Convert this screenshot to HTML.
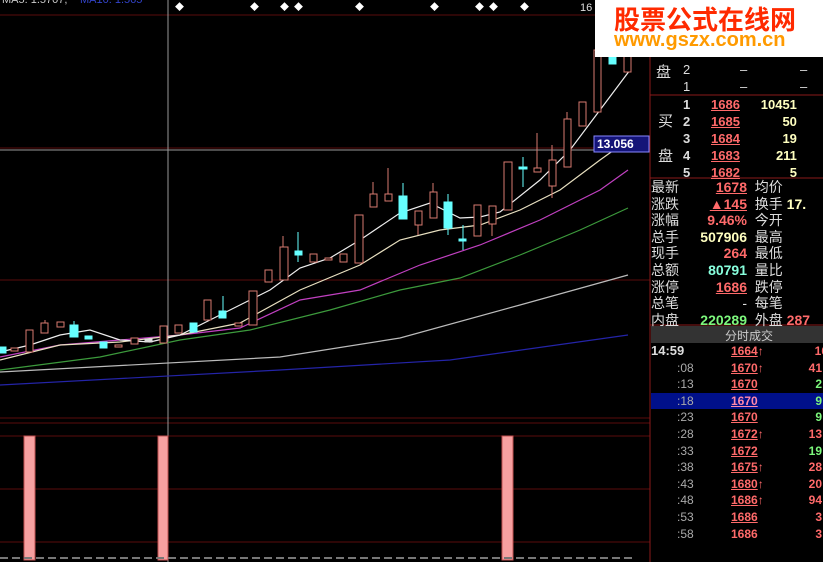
<!DOCTYPE html>
<html><head><meta charset="utf-8"><style>
body{margin:0;background:#000;width:823px;height:562px;overflow:hidden;position:relative;font-family:"Liberation Sans","Noto Sans CJK SC",sans-serif}
.p{position:absolute;white-space:nowrap;font-size:13px}
.r{color:#ff6a6a;font-weight:bold}
.u{text-decoration:underline}
.w{color:#ddd}
.y{color:#ffffc0;font-weight:bold}
.g{color:#7cf77c;font-weight:bold}
.t{display:inline-block;width:80px;color:#aaa;padding-left:26px;box-sizing:border-box}
.v{position:absolute;right:1px;text-align:right}
.row{position:relative;height:16.6px}
</style></head><body>
<svg width="823" height="562" style="position:absolute;left:0;top:0">
<g stroke="#5a0c0c" stroke-width="1">
<line x1="0" y1="15" x2="650" y2="15"/><line x1="0" y1="148" x2="650" y2="148"/>
<line x1="0" y1="280" x2="650" y2="280"/><line x1="0" y1="418" x2="650" y2="418"/>
<line x1="0" y1="423" x2="650" y2="423"/><line x1="0" y1="436" x2="650" y2="436"/>
<line x1="0" y1="489" x2="650" y2="489"/><line x1="0" y1="542" x2="650" y2="542"/>
</g>
<line x1="650" y1="0" x2="650" y2="562" stroke="#8a1a1a"/>
<line x1="0" y1="150" x2="595" y2="150" stroke="#999"/>
<line x1="168" y1="0" x2="168" y2="562" stroke="#999"/>
<text x="2" y="3" fill="#ccc" font-size="11" font-family="Liberation Sans">MA5: 1.5707,</text><text x="80" y="3" fill="#3344cc" font-size="11">MA10: 1.565</text>
<g fill="#fff"><text x="175" y="10" font-size="9">◆</text><text x="250" y="10" font-size="9">◆</text><text x="280" y="10" font-size="9">◆</text><text x="294" y="10" font-size="9">◆</text><text x="355" y="10" font-size="9">◆</text><text x="430" y="10" font-size="9">◆</text><text x="475" y="10" font-size="9">◆</text><text x="489" y="10" font-size="9">◆</text><text x="520" y="10" font-size="9">◆</text></g>
<g fill="none" stroke-width="1.2">
<polyline stroke="#2424a8" points="0,385 280,370 450,360 628,335"/>
<polyline stroke="#bbb" points="0,372 280,357 400,338 520,305 628,275"/>
<polyline stroke="#3c9a3c" points="0,370 100,357 180,340 250,330 330,310 400,290 460,278 520,255 580,230 628,208"/>
<polyline stroke="#c040c0" points="0,357 60,345 120,340 180,335 240,328 300,300 360,290 420,265 480,245 540,220 600,190 628,170"/>
<polyline stroke="#e8e0c0" points="0,360 60,345 120,342 180,335 240,323 300,290 360,265 400,240 440,230 480,225 520,210 560,190 600,160 628,140"/>
<polyline stroke="#eee" points="0,352 30,345 60,335 90,330 120,340 150,342 180,335 210,320 240,305 270,290 300,268 330,258 360,240 400,213 430,203 460,218 480,217 500,212 540,180 570,150 600,110 630,70"/>
</g>
<g stroke="#d87a70" fill="#000" stroke-width="1">
<rect x="11" y="348" width="7" height="3"/><rect x="26" y="330" width="7" height="22"/><rect x="41" y="323" width="7" height="10"/><rect x="57" y="322" width="7" height="5"/><rect x="115" y="345" width="7" height="2"/><rect x="131" y="338" width="7" height="6"/><rect x="160" y="326" width="7" height="17"/><rect x="175" y="325" width="7" height="8"/><rect x="204" y="300" width="7" height="20"/><rect x="235" y="323" width="7" height="3"/><rect x="249" y="291" width="8" height="34"/><rect x="265" y="270" width="7" height="12"/><rect x="280" y="247" width="8" height="33"/><rect x="310" y="254" width="7" height="8"/><rect x="325" y="258" width="7" height="2"/><rect x="340" y="254" width="7" height="8"/><rect x="355" y="215" width="8" height="48"/><rect x="370" y="194" width="7" height="13"/><rect x="385" y="194" width="7" height="7"/><rect x="415" y="211" width="7" height="14"/><rect x="430" y="192" width="7" height="26"/><rect x="474" y="205" width="7" height="31"/><rect x="489" y="206" width="7" height="18"/><rect x="504" y="162" width="8" height="48"/><rect x="534" y="168" width="7" height="4"/><rect x="549" y="160" width="7" height="26"/><rect x="564" y="119" width="7" height="48"/><rect x="579" y="102" width="7" height="24"/><rect x="594" y="50" width="7" height="62"/><rect x="624" y="50" width="7" height="22"/>
</g>
<g stroke="#d87a70"><line x1="45" y1="320" x2="45" y2="323"/><line x1="283" y1="236" x2="283" y2="247"/><line x1="373" y1="182" x2="373" y2="194"/><line x1="388" y1="168" x2="388" y2="194"/><line x1="433" y1="183" x2="433" y2="192"/><line x1="537" y1="133" x2="537" y2="168"/><line x1="552" y1="145" x2="552" y2="160"/><line x1="567" y1="112" x2="567" y2="119"/><line x1="418" y1="225" x2="418" y2="235"/><line x1="492" y1="224" x2="492" y2="236"/><line x1="552" y1="186" x2="552" y2="198"/></g>
<g fill="#6ff" stroke="#6ff">
<rect x="0" y="347" width="6" height="6"/><rect x="70" y="325" width="8" height="12"/><rect x="85" y="336" width="7" height="3"/><rect x="100" y="342" width="7" height="6"/><rect x="145" y="339" width="7" height="3" fill="#ddd" stroke="#ddd"/><rect x="190" y="323" width="7" height="9"/><rect x="219" y="311" width="7" height="7"/><rect x="295" y="251" width="7" height="4"/><rect x="399" y="196" width="8" height="23"/><rect x="444" y="202" width="8" height="26"/><rect x="459" y="239" width="7" height="2"/><rect x="519" y="167" width="8" height="2"/><rect x="609" y="56" width="7" height="8"/>
<line x1="74" y1="321" x2="74" y2="325"/><line x1="223" y1="296" x2="223" y2="311"/><line x1="298" y1="232" x2="298" y2="262"/><line x1="403" y1="183" x2="403" y2="196"/><line x1="448" y1="194" x2="448" y2="235"/><line x1="463" y1="225" x2="463" y2="250"/><line x1="523" y1="157" x2="523" y2="187"/><line x1="612" y1="45" x2="612" y2="56"/></g>
<g fill="#f6a0a0" stroke="#c05050"><rect x="24" y="436" width="11" height="124"/><rect x="158" y="436" width="10" height="124"/><rect x="502" y="436" width="11" height="124"/></g>
<line x1="0" y1="558" x2="635" y2="558" stroke="#777" stroke-width="2" stroke-dasharray="8,4"/>
<rect x="594" y="136" width="55" height="16" fill="#141478" stroke="#8888ff"/>
<text x="597" y="148" fill="#fff" font-size="12" font-weight="bold" font-family="Liberation Sans">13.056</text>
<line x1="650" y1="95" x2="823" y2="95" stroke="#8a1a1a"/><line x1="650" y1="178" x2="823" y2="178" stroke="#8a1a1a"/><line x1="650" y1="325" x2="823" y2="325" stroke="#8a1a1a"/>
<rect x="651" y="326" width="172" height="17" fill="#333"/>
<rect x="651" y="393" width="172" height="16" fill="#00108a"/>
</svg>
<div style="position:absolute;left:595px;top:0;width:228px;height:57px;background:#fff"></div>
<div class="p" style="left:614px;top:0;font-size:26px;font-weight:bold;color:#ff2a00">股票公式在线网</div>
<div class="p" style="left:614px;top:29px;font-size:20px;font-weight:bold;color:#ff9a00">www.gszx.com.cn</div>
<div class="p w" style="left:580px;top:2px;font-size:11px">16</div>
<div class="p w" style="left:656px;top:61px;font-size:15px">盘</div>
<div class="p w" style="left:683px;top:62px">2</div><div class="p w" style="left:740px;top:62px">–</div><div class="p w" style="left:800px;top:62px">–</div>
<div class="p w" style="left:683px;top:79px">1</div><div class="p w" style="left:740px;top:79px">–</div><div class="p w" style="left:800px;top:79px">–</div>
<div class="p w" style="left:658px;top:110px;font-size:15px">买</div><div class="p w" style="left:658px;top:145px;font-size:15px">盘</div>
<div style="position:absolute;left:683px;top:96px;font-size:13px;line-height:17px;font-weight:bold">
<div><span class="w" style="display:inline-block;width:28px">1</span><span class="r u">1686</span><span class="y" style="display:inline-block;width:57px;text-align:right">10451</span></div>
<div><span class="w" style="display:inline-block;width:28px">2</span><span class="r u">1685</span><span class="y" style="display:inline-block;width:57px;text-align:right">50</span></div>
<div><span class="w" style="display:inline-block;width:28px">3</span><span class="r u">1684</span><span class="y" style="display:inline-block;width:57px;text-align:right">19</span></div>
<div><span class="w" style="display:inline-block;width:28px">4</span><span class="r u">1683</span><span class="y" style="display:inline-block;width:57px;text-align:right">211</span></div>
<div><span class="w" style="display:inline-block;width:28px">5</span><span class="r u">1682</span><span class="y" style="display:inline-block;width:57px;text-align:right">5</span></div>
</div>
<div style="position:absolute;left:651px;top:179px;font-size:14px;line-height:16.6px;color:#ddd;width:172px;overflow:hidden;white-space:nowrap">
<div><span style="display:inline-block;width:96px">最新<span class="r u" style="float:right">1678</span></span>&nbsp;&nbsp;均价</div>
<div><span style="display:inline-block;width:96px">涨跌<span class="r u" style="float:right">▲145</span></span>&nbsp;&nbsp;换手 <span class="y">17.</span></div>
<div><span style="display:inline-block;width:96px">涨幅<span class="r" style="float:right">9.46%</span></span>&nbsp;&nbsp;今开</div>
<div><span style="display:inline-block;width:96px">总手<span class="y" style="float:right">507906</span></span>&nbsp;&nbsp;最高</div>
<div><span style="display:inline-block;width:96px">现手<span class="r" style="float:right">264</span></span>&nbsp;&nbsp;最低</div>
<div><span style="display:inline-block;width:96px">总额<span style="float:right;color:#8fd;font-weight:bold">80791</span></span>&nbsp;&nbsp;量比</div>
<div><span style="display:inline-block;width:96px">涨停<span class="r u" style="float:right">1686</span></span>&nbsp;&nbsp;跌停</div>
<div><span style="display:inline-block;width:96px">总笔<span style="float:right">-</span></span>&nbsp;&nbsp;每笔</div>
<div><span style="display:inline-block;width:96px">内盘<span class="g" style="float:right">220289</span></span>&nbsp;&nbsp;外盘 <span class="r">287</span></div>
</div>
<div class="p" style="left:725px;top:327px;font-size:12px;color:#ccc">分时成交</div>
<div style="position:absolute;left:651px;top:343px;font-size:12px;line-height:16.6px;width:172px;overflow:hidden;white-space:nowrap">
<div class="row"><span style="display:inline-block;width:80px;color:#ddd;font-weight:bold;font-size:13px">14:59</span><span class="r u">1664</span><span class="r">↑</span><span class="r v" style="right:-5px">16</span></div>
<div class="row"><span class="t">:08</span><span class="r u">1670</span><span class="r">↑</span><span class="r v">41</span></div>
<div class="row"><span class="t">:13</span><span class="r u">1670</span><span class="g v">2</span></div>
<div class="row"><span class="t">:18</span><span class="r u" style="color:#f8a">1670</span><span class="g v">9</span></div>
<div class="row"><span class="t">:23</span><span class="r u">1670</span><span class="g v">9</span></div>
<div class="row"><span class="t">:28</span><span class="r u">1672</span><span class="r">↑</span><span class="r v">13</span></div>
<div class="row"><span class="t">:33</span><span class="r u">1672</span><span class="g v">19</span></div>
<div class="row"><span class="t">:38</span><span class="r u">1675</span><span class="r">↑</span><span class="r v">28</span></div>
<div class="row"><span class="t">:43</span><span class="r u">1680</span><span class="r">↑</span><span class="r v">20</span></div>
<div class="row"><span class="t">:48</span><span class="r u">1686</span><span class="r">↑</span><span class="r v">94</span></div>
<div class="row"><span class="t">:53</span><span class="r u">1686</span><span class="r v">3</span></div>
<div class="row"><span class="t">:58</span><span class="r">1686</span><span class="r v">3</span></div>
</div>
</body></html>
